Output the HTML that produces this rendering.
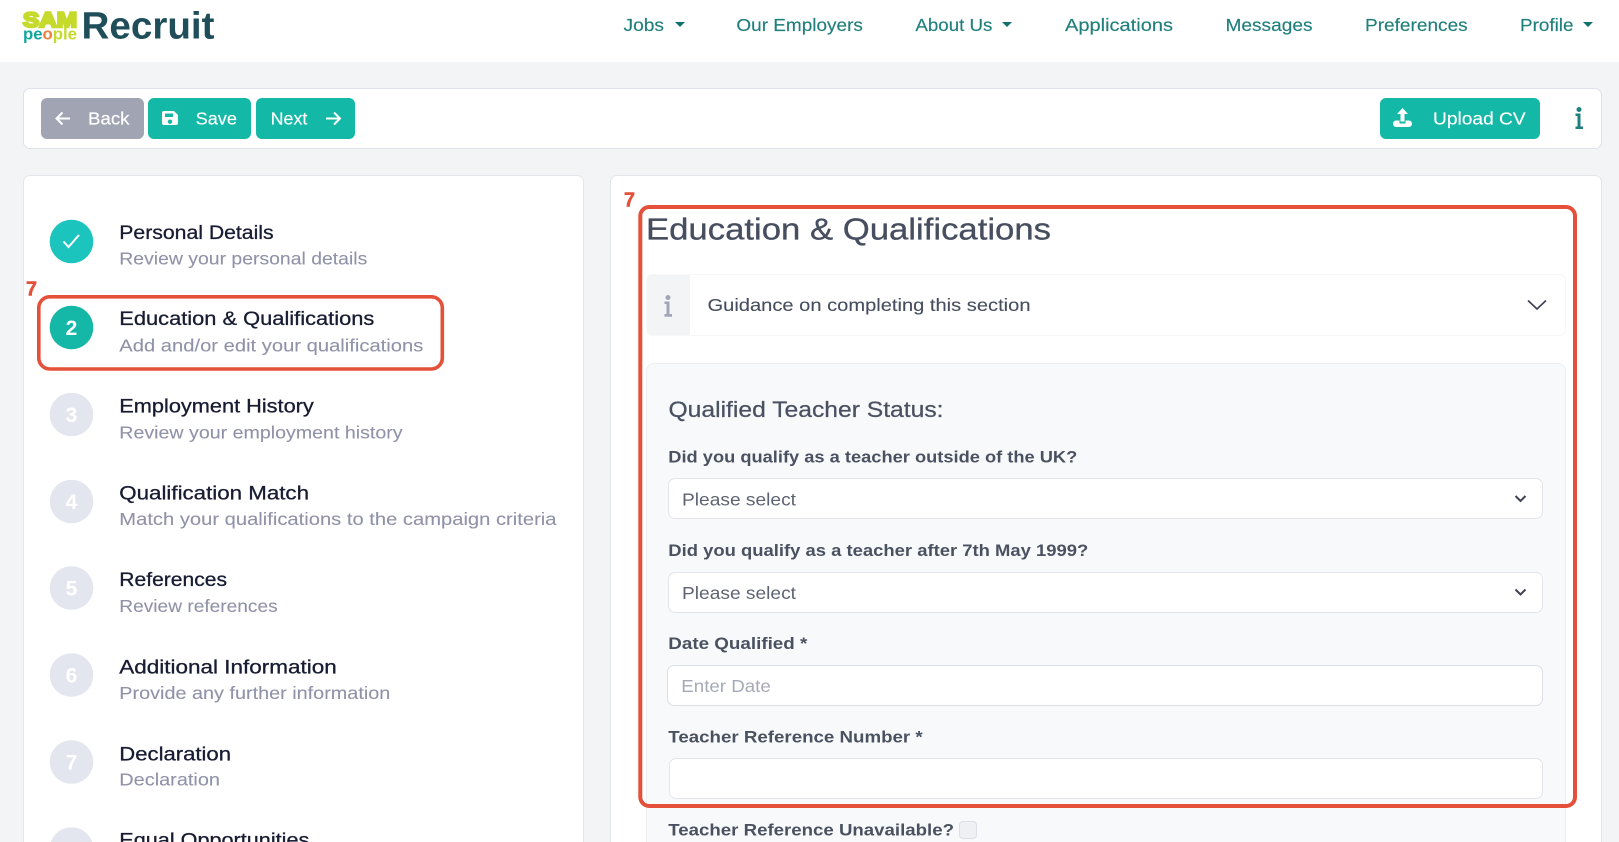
<!DOCTYPE html>
<html lang="en"><head><meta charset="utf-8"><title>Education &amp; Qualifications</title>
<style>
html,body{margin:0;padding:0;width:1619px;height:842px;overflow:hidden;background:#f3f4f6;font-family:"Liberation Sans",sans-serif}
#p{position:relative;width:1619px;height:842px;overflow:hidden;filter:blur(.3px)}
.b{position:absolute;box-sizing:border-box}
svg{position:absolute;left:0;top:0}
text{font-family:"Liberation Sans",sans-serif}
.nav{font-size:17.5px;fill:#1f7f7c;stroke:#1f7f7c;stroke-width:.15px}
.btn{font-size:17.5px;fill:#fff;stroke:#fff;stroke-width:.15px}
.t{font-size:19.5px;fill:#181c32;stroke:#181c32;stroke-width:.3px}
.s{font-size:17.5px;fill:#8f92a8;stroke:#8f92a8;stroke-width:.1px}
.d{font-size:21px;font-weight:700;fill:#fff;text-anchor:middle}
.l{font-size:17px;font-weight:700;fill:#4a5160}
.v{font-size:17.5px;fill:#5e6372}
.r{font-size:20px;font-weight:700;fill:#e4503a;stroke:#e4503a;stroke-width:.5px}
</style></head><body><div id="p">
<div class="b" style="left:0;top:0;width:1619px;height:62px;background:#fff"></div>
<div class="b" style="left:23px;top:88px;width:1579px;height:61px;background:#fff;border:1px solid #dfe1e8;border-radius:7px"></div>
<div class="b" style="left:41px;top:98px;width:103px;height:41px;background:#a1a5b3;border-radius:6px"></div>
<div class="b" style="left:148px;top:98px;width:103px;height:41px;background:#14b8a6;border-radius:6px"></div>
<div class="b" style="left:256px;top:98px;width:99px;height:41px;background:#14b8a6;border-radius:6px"></div>
<div class="b" style="left:1380px;top:98px;width:160px;height:41px;background:#14b8a6;border-radius:6px"></div>
<div class="b" style="left:23px;top:175px;width:561px;height:690px;background:#fff;border:1px solid #e4e6ec;border-radius:7px"></div>
<div class="b" style="left:610px;top:175px;width:992px;height:690px;background:#fff;border:1px solid #e4e6ec;border-radius:7px"></div>
<div class="b" style="left:646px;top:274px;width:920px;height:62px;background:#fff;border:1px solid #f7f7f9;border-radius:6px;overflow:hidden"><div style="width:43px;height:100%;background:#f3f4f6"></div></div>
<div class="b" style="left:646px;top:362.500px;width:920px;height:500px;background:#f8f9fb;border:1px solid #eceef2;border-radius:8px"></div>
<div class="b" style="left:668px;top:478px;width:875px;height:41px;background:#fff;border:1px solid #e3e5ea;border-radius:7px"></div>
<div class="b" style="left:668px;top:572px;width:875px;height:41px;background:#fff;border:1px solid #e3e5ea;border-radius:7px"></div>
<div class="b" style="left:667px;top:665px;width:876px;height:41px;background:#fff;border:1px solid #dcdfe6;border-radius:7px"></div>
<div class="b" style="left:668.500px;top:758px;width:874.500px;height:41px;background:#fff;border:1px solid #e3e5ea;border-radius:7px"></div>
<div class="b" style="left:959px;top:821px;width:18px;height:18px;background:#eff0f3;border:1px solid #dcdfe6;border-radius:4px"></div>
<svg width="1619" height="842" viewBox="0 0 1619 842" xmlns="http://www.w3.org/2000/svg">
<text x="23" y="27" font-size="21" font-weight="700" fill="#c6da2c" stroke="#c6da2c" stroke-width="2.400" textLength="54" lengthAdjust="spacingAndGlyphs">SAM</text>
<text x="23" y="39.500" font-size="17" font-weight="700" fill="#13a89e" textLength="54" lengthAdjust="spacingAndGlyphs">pe<tspan fill="#ee7d3a">o</tspan><tspan fill="#c6da2c">ple</tspan></text>
<text x="81.500" y="38.500" font-size="38" font-weight="700" fill="#1f4e5a" textLength="133" lengthAdjust="spacingAndGlyphs">Recruit</text>
<text class="nav" x="623.500" y="31" textLength="40.500" lengthAdjust="spacingAndGlyphs">Jobs</text>
<path d="M675 22h10l-5 5z" fill="#12706c"/>
<text class="nav" x="736.400" y="31" textLength="126.500" lengthAdjust="spacingAndGlyphs">Our Employers</text>
<text class="nav" x="915.400" y="31" textLength="77" lengthAdjust="spacingAndGlyphs">About Us</text>
<path d="M1002 22h10l-5 5z" fill="#12706c"/>
<text class="nav" x="1065" y="31" textLength="108" lengthAdjust="spacingAndGlyphs">Applications</text>
<text class="nav" x="1225.500" y="31" textLength="87" lengthAdjust="spacingAndGlyphs">Messages</text>
<text class="nav" x="1365" y="31" textLength="102.700" lengthAdjust="spacingAndGlyphs">Preferences</text>
<text class="nav" x="1520" y="31" textLength="53.500" lengthAdjust="spacingAndGlyphs">Profile</text>
<path d="M1583 22h10l-5 5z" fill="#12706c"/>

<path d="M70 118.500H56.500M62.500 112.500l-6 6 6 6" fill="none" stroke="#fff" stroke-width="2"/>
<text class="btn" x="88" y="124.500" textLength="41.500" lengthAdjust="spacingAndGlyphs">Back</text>
<path fill-rule="evenodd" d="M164 111h10l4 4v8a2 2 0 0 1-2 2h-12a2 2 0 0 1-2-2v-10a2 2 0 0 1 2-2zm1 2.500v3.500h8v-3.500zm5 6a2.200 2.200 0 1 0 .01 0z" fill="#fff"/>
<text class="btn" x="195.600" y="124.500" textLength="41.400" lengthAdjust="spacingAndGlyphs">Save</text>
<text class="btn" x="270.700" y="124.500" textLength="36.600" lengthAdjust="spacingAndGlyphs">Next</text>
<path d="M326 118.500h14M334 112.500l6 6-6 6" fill="none" stroke="#fff" stroke-width="2"/>
<path d="M1402.500 108l5.500 6h-3.500v7.500h-4v-7.500H1397zM1396 120.500h3.500v3h6v-3h3.500a3.200 3.200 0 0 1 3 3.300 3.200 3.200 0 0 1-3 3.200h-13a3.200 3.200 0 0 1-3-3.200 3.200 3.200 0 0 1 3-3.300z" fill="#fff"/>
<text class="btn" x="1433" y="124.500" textLength="92.700" lengthAdjust="spacingAndGlyphs">Upload CV</text>
<path d="M1579 107a2.500 2.500 0 1 1-.01 0zM1575.500 113.500h5v13h2.500v2.500h-7.500v-2.500h2v-10.500h-2z" fill="#1f7f7c"/>

<circle cx="71.500" cy="241.500" r="21.800" fill="#1bc5bd"/>
<path d="M63.500 241.500l5 5.500 10.500-12" fill="none" stroke="#fff" stroke-width="2"/>
<text class="t" x="119.300" y="239" textLength="154.300" lengthAdjust="spacingAndGlyphs">Personal Details</text>
<text class="s" x="119.300" y="264.300" textLength="248" lengthAdjust="spacingAndGlyphs">Review your personal details</text>

<circle cx="71.500" cy="327.500" r="21.800" fill="#15b8a6"/><text class="d" x="71.500" y="334.800">2</text>
<text class="t" x="119.300" y="325" textLength="255" lengthAdjust="spacingAndGlyphs">Education &amp; Qualifications</text>
<text class="s" x="119.300" y="351.500" textLength="304" lengthAdjust="spacingAndGlyphs">Add and/or edit your qualifications</text>

<circle cx="71.500" cy="414.500" r="21.800" fill="#e4e6ef"/><text class="d" x="71.500" y="421.800">3</text>
<text class="t" x="119.300" y="412.300" textLength="194.500" lengthAdjust="spacingAndGlyphs">Employment History</text>
<text class="s" x="119.300" y="438.300" textLength="283.300" lengthAdjust="spacingAndGlyphs">Review your employment history</text>

<circle cx="71.500" cy="501.500" r="21.800" fill="#e4e6ef"/><text class="d" x="71.500" y="508.800">4</text>
<text class="t" x="119.300" y="499.300" textLength="189.700" lengthAdjust="spacingAndGlyphs">Qualification Match</text>
<text class="s" x="119.300" y="525" textLength="437.200" lengthAdjust="spacingAndGlyphs">Match your qualifications to the campaign criteria</text>

<circle cx="71.500" cy="588" r="21.800" fill="#e4e6ef"/><text class="d" x="71.500" y="595.300">5</text>
<text class="t" x="119.300" y="586" textLength="107.700" lengthAdjust="spacingAndGlyphs">References</text>
<text class="s" x="119.300" y="612" textLength="158.400" lengthAdjust="spacingAndGlyphs">Review references</text>

<circle cx="71.500" cy="675" r="21.800" fill="#e4e6ef"/><text class="d" x="71.500" y="682.300">6</text>
<text class="t" x="119.300" y="673.300" textLength="217.500" lengthAdjust="spacingAndGlyphs">Additional Information</text>
<text class="s" x="119.300" y="699.200" textLength="271" lengthAdjust="spacingAndGlyphs">Provide any further information</text>

<circle cx="71.500" cy="762" r="21.800" fill="#e4e6ef"/><text class="d" x="71.500" y="769.300">7</text>
<text class="t" x="119.300" y="760.300" textLength="111.700" lengthAdjust="spacingAndGlyphs">Declaration</text>
<text class="s" x="119.300" y="785.300" textLength="100.700" lengthAdjust="spacingAndGlyphs">Declaration</text>

<circle cx="71.500" cy="849" r="21.800" fill="#e4e6ef"/>
<text class="t" x="119.300" y="846.500" textLength="190" lengthAdjust="spacingAndGlyphs">Equal Opportunities</text>

<rect x="38.800" y="296.800" width="403.500" height="72.200" rx="11" fill="none" stroke="#e4503a" stroke-width="3.600"/>
<text class="r" x="26" y="295.500" textLength="11" lengthAdjust="spacingAndGlyphs">7</text>

<text x="646" y="239.300" font-size="30.500" fill="#464e5f" stroke="#464e5f" stroke-width=".3" textLength="405" lengthAdjust="spacingAndGlyphs">Education &amp; Qualifications</text>
<path d="M668 295a2.500 2.500 0 1 1-.01 0zM664.500 301.500h5v12.500h2.500v2.700h-7.500V314h2v-10h-2z" fill="#a1a5b7"/>
<text x="707.500" y="311" font-size="17.500" fill="#464e5f" stroke="#464e5f" stroke-width=".12" textLength="323" lengthAdjust="spacingAndGlyphs">Guidance on completing this section</text>
<path d="M1528 300.500l9 8.500 9-8.500" fill="none" stroke="#3f4254" stroke-width="1.700"/>

<text x="668.500" y="417" font-size="22" fill="#4a5160" stroke="#4a5160" stroke-width=".25" textLength="275" lengthAdjust="spacingAndGlyphs">Qualified Teacher Status:</text>

<text class="l" x="668.300" y="462.600" textLength="409" lengthAdjust="spacingAndGlyphs">Did you qualify as a teacher outside of the UK?</text>
<text class="v" x="682" y="505.500" textLength="114" lengthAdjust="spacingAndGlyphs">Please select</text>
<path d="M1515.500 496l5 5 5-5" fill="none" stroke="#3f4254" stroke-width="2"/>
<text class="l" x="668.300" y="555.800" textLength="420" lengthAdjust="spacingAndGlyphs">Did you qualify as a teacher after 7th May 1999?</text>
<text class="v" x="682" y="599" textLength="114" lengthAdjust="spacingAndGlyphs">Please select</text>
<path d="M1515.500 589.500l5 5 5-5" fill="none" stroke="#3f4254" stroke-width="2"/>
<text class="l" x="668.300" y="648.800" textLength="139" lengthAdjust="spacingAndGlyphs">Date Qualified *</text>
<text x="681.300" y="691.800" font-size="17.500" fill="#a6a9b8" textLength="89.500" lengthAdjust="spacingAndGlyphs">Enter Date</text>
<text class="l" x="668.300" y="742.300" textLength="254.400" lengthAdjust="spacingAndGlyphs">Teacher Reference Number *</text>
<text class="l" x="668.300" y="835.700" textLength="285.700" lengthAdjust="spacingAndGlyphs">Teacher Reference Unavailable?</text>

<rect x="640.300" y="207" width="934.700" height="599" rx="9" fill="none" stroke="#e4503a" stroke-width="4"/>
<text class="r" x="624" y="206.500" textLength="11" lengthAdjust="spacingAndGlyphs">7</text>
</svg>
</div></body></html>
